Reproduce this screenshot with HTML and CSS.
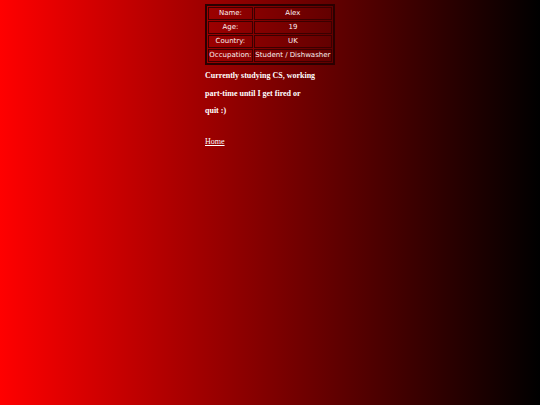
FILE: index.html
```html
<!DOCTYPE html>
<html>
<head>
<meta charset="utf-8">
<link rel="stylesheet" href="styles.css">
</head>
<body>
<div class="page">
  <table class="info">
    <tr><td class="k">Name:</td><td class="v">Alex</td></tr>
    <tr><td class="k">Age:</td><td class="v">19</td></tr>
    <tr><td class="k">Country:</td><td class="v">UK</td></tr>
    <tr><td class="k">Occupation:</td><td class="v">Student / Dishwasher</td></tr>
  </table>
  <p class="bio">Currently studying CS, working part-time until I get fired or quit :)</p>
  <a class="home" href="#">Home</a>
</div>
</body>
</html>
```

FILE: styles.css
```css
html, body {
  margin: 0;
  padding: 0;
  height: 100%;
}
body {
  background: linear-gradient(to right, #ff0000 0%, #000000 100%);
  color: #ffffff;
  font-family: "Liberation Serif", serif;
}
.page {
  width: 130px;
  margin: 0 auto;
  padding-top: 4px;
}
.info {
  border: 2px solid #2a0000;
  border-spacing: 1px;
  width: 130px;
}
.info td {
  border: 1px solid #3a0000;
  font-family: "DejaVu Sans", sans-serif;
  font-size: 7px;
  line-height: 11px;
  height: 11px;
  padding: 0;
  text-align: center;
  color: #fbf0f0;
  white-space: nowrap;
}
.bio {
  width: 111px;
  margin: 2px 0 10px 0;
  font-weight: bold;
  font-size: 8px;
  line-height: 17.5px;
}
.home {
  color: #ffffff;
  font-size: 8px;
}
```
